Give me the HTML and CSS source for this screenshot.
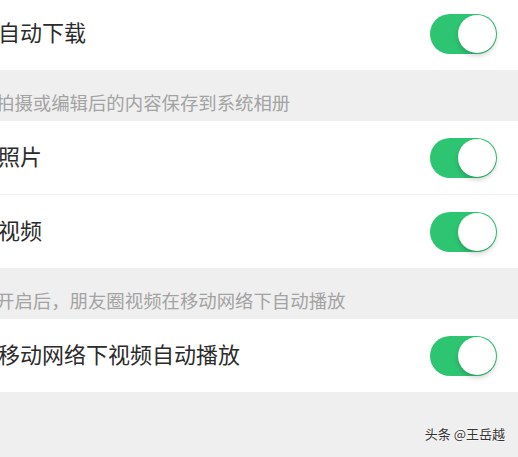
FILE: index.html
```
<!DOCTYPE html>
<html lang="zh-CN">
<head>
    <meta charset="UTF-8">
    <meta name="viewport" content="width=device-width, initial-scale=1.0">
    <title>照片和视频</title>
    <link rel="stylesheet" href="styles.css">
</head>
<body>
<div id="page">
    <ul class="group">
        <li class="cell">
            <span class="label">自动下载</span>
            <a class="switch on"></a>
        </li>
    </ul>
    <p class="tips">拍摄或编辑后的内容保存到系统相册</p>
    <ul class="group">
        <li class="cell">
            <span class="label">照片</span>
            <a class="switch on"></a>
        </li>
        <li class="cell">
            <span class="label">视频</span>
            <a class="switch on"></a>
        </li>
    </ul>
    <p class="tips">开启后，朋友圈视频在移动网络下自动播放</p>
    <ul class="group">
        <li class="cell">
            <span class="label">移动网络下视频自动播放</span>
            <a class="switch on"></a>
        </li>
    </ul>
    <div class="mark">头条 @王岳越</div>
</div>
</body>
</html>
```

FILE: styles.css
```
html,
body {
    margin: 0;
    height: 100%;
}

body {
    background: #efefef;
    font-family: "Noto Sans CJK SC", "Noto Sans", sans-serif;
    overflow: hidden;
}

#page {
    position: relative;
    height: 100%;
    margin-top: -3px;
}

ul {
    margin: 0;
    padding: 0;
    list-style: none;
}

.group {
    background: #fff;
}

.cell {
    display: flex;
    align-items: center;
    justify-content: space-between;
    height: 73px;
    padding: 0 21px 0 0;
    margin-left: -2px;
}

.cell + .cell {
    border-top: 1px solid #f3f3f3;
}

.label {
    font-size: 22px;
    line-height: 30px;
    padding-bottom: 5px;
    color: #2b2b2b;
}

.switch {
    position: relative;
    display: block;
    width: 67px;
    height: 40px;
    border-radius: 20px;
    background: #2dc572;
}

.switch::after {
    content: "";
    position: absolute;
    right: 1px;
    top: 1px;
    width: 38px;
    height: 38px;
    border-radius: 50%;
    background: #fff;
    box-shadow: 0 3px 5px rgba(0, 0, 0, .18);
}

.tips {
    margin: 0 0 0 -4px;
    padding: 21px 0 8px;
    font-size: 18.4px;
    line-height: 22px;
    color: #a3a3a3;
}

.mark {
    position: absolute;
    right: 13px;
    bottom: 11px;
    font-size: 13px;
    color: #333;
    text-shadow: 0 0 2px #fff, 0 0 2px #fff;
}
```
